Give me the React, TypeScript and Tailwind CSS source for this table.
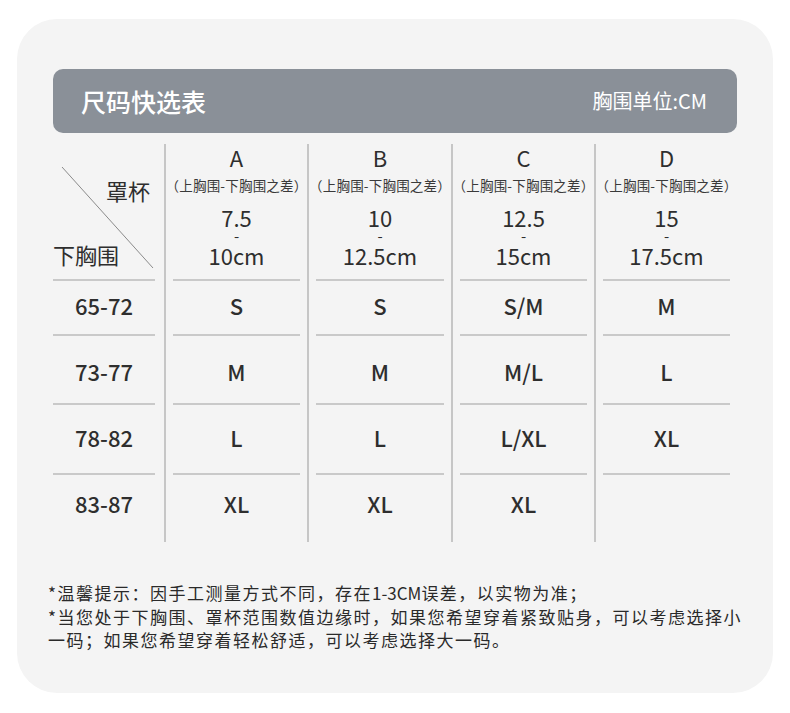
import React from "react";

const cups = [
  { cup: "A", from: "7.5", to: "10cm", w: "w-[143px]" },
  { cup: "B", from: "10", to: "12.5cm", w: "w-[144px]" },
  { cup: "C", from: "12.5", to: "15cm", w: "w-[143px]" },
  { cup: "D", from: "15", to: "17.5cm", w: "w-[143px]" },
];

// pad = nudges the text inside each row so it sits where the reference has it
const rows = [
  { h: "h-[55px]", pad: "pb-[6px]", cells: ["65-72", "S", "S", "S/M", "M"] },
  { h: "h-[69px]", pad: "pt-[2px]", cells: ["73-77", "M", "M", "M/L", "L"] },
  { h: "h-[70px]", pad: "pb-[4px]", cells: ["78-82", "L", "L", "L/XL", "XL"] },
  { h: "h-[67px]", pad: "pb-[12px]", cells: ["83-87", "XL", "XL", "XL", ""] },
];

const font = { fontFamily: '"Noto Sans CJK SC", "Noto Sans", sans-serif' };

function Line({ first }: { first?: boolean }) {
  return (
    <div
      className={
        first
          ? "h-[2px] bg-[#c9c9c9] mr-[9px]"
          : "h-[2px] bg-[#c9c9c9] mx-[7px]"
      }
    />
  );
}

export default function App() {
  return (
    <div className="w-[790px] h-[713px] bg-white pt-[19px] pl-[17px]" style={font}>
      <div className="w-[756px] h-[674px] rounded-[40px] bg-[#f4f4f4] px-[36px] pt-[50px]">
        {/* title bar */}
        <div className="h-[64px] rounded-[10px] bg-[#8a9098] flex items-center justify-between pl-[28px] pr-[30px] text-white">
          <span className="text-[25px] font-medium leading-none">尺码快选表</span>
          <span className="text-[20px] leading-none">胸围单位:CM</span>
        </div>

        {/* table */}
        <div className="mt-[11px] text-[#2e2e2e]">
          {/* header row */}
          <div className="flex h-[137px]">
            <div className="relative w-[111px] flex flex-col">
              <svg className="absolute left-0 top-0" width="111" height="135">
                <line x1="9" y1="23" x2="100" y2="124" stroke="#8a8a8a" strokeWidth="1" />
              </svg>
              <div className="flex-1 flex flex-col justify-between pt-[33px] pb-[12px] text-[22px] leading-[26px]">
                <span className="self-end pr-[14px]">罩杯</span>
                <span>下胸围</span>
              </div>
              <Line first />
            </div>
            {cups.map((c) => (
              <div key={c.cup} className={`${c.w} flex flex-col border-l-2 border-[#c6c6c6]`}>
                <div className="flex-1 flex flex-col items-center">
                  <span className="text-[22px] leading-[26px]">{c.cup}</span>
                  <span className="mt-[7px] text-[13.5px] leading-[16px] text-[#3a3a3a] whitespace-nowrap tracking-[0.2px]">
                    （上胸围-下胸围之差）
                  </span>
                  <span className="mt-[11px] text-[22px] leading-[26px]">{c.from}</span>
                  <span className="text-[15px] leading-[12px]">-</span>
                  <span className="text-[22px] leading-[26px]">{c.to}</span>
                </div>
                <Line />
              </div>
            ))}
          </div>

          {/* body rows */}
          {rows.map((r, ri) => (
            <div key={ri} className={`flex ${r.h}`}>
              {r.cells.map((v, ci) => (
                <div
                  key={ci}
                  className={
                    ci === 0
                      ? "w-[111px] flex flex-col"
                      : `${cups[ci - 1].w} flex flex-col border-l-2 border-[#c6c6c6]`
                  }
                >
                  <div className={`flex-1 flex items-center justify-center text-[22px] font-medium leading-none ${r.pad}`}>
                    <span className={ci === 0 ? "pr-[9px]" : ""}>{v}</span>
                  </div>
                  {ri < rows.length - 1 && <Line first={ci === 0} />}
                </div>
              ))}
            </div>
          ))}
        </div>

        {/* notes */}
        <div className="mt-[39px] -ml-[5px] w-[705px] text-[17px] leading-[23.5px] tracking-[1.5px] text-[#2a2a2a]">
          <p>
            *温馨提示：因手工测量方式不同，存在<span className="tracking-[0px]">1-3CM</span>误差，以实物为准；
          </p>
          <p>*当您处于下胸围、罩杯范围数值边缘时，如果您希望穿着紧致贴身，可以考虑选择小一码；如果您希望穿着轻松舒适，可以考虑选择大一码。</p>
        </div>
      </div>
    </div>
  );
}
